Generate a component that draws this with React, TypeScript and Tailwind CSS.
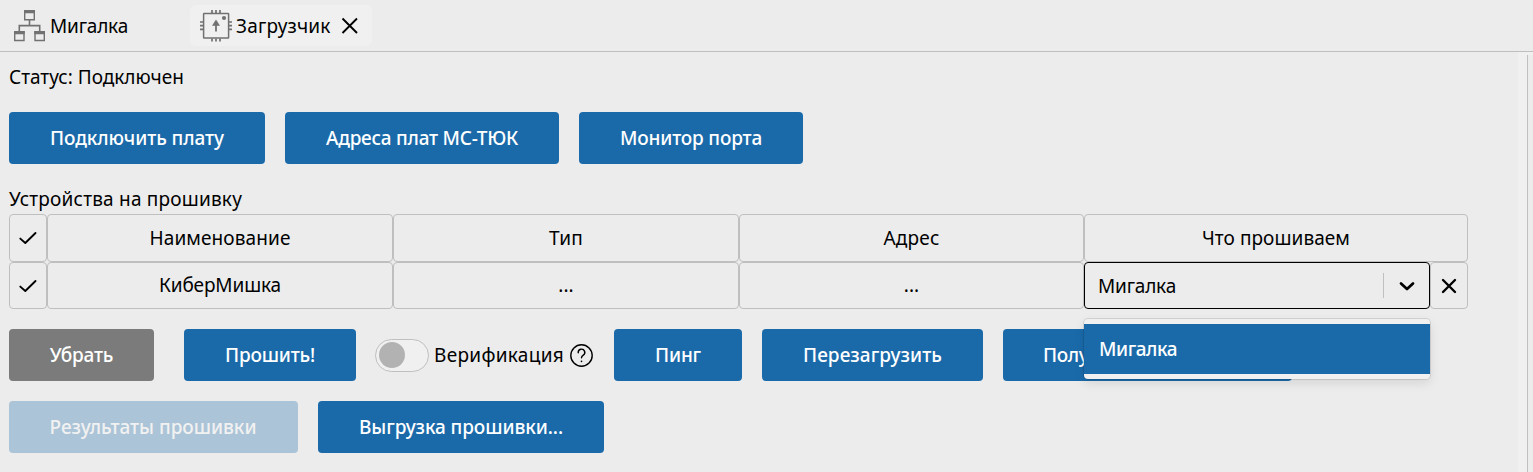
import type { ReactNode } from 'react';

function Button({ children, className }: { children: ReactNode; className: string }) {
  return (
    <button className={`flex h-[52px] shrink-0 items-center whitespace-nowrap rounded font-medium text-white ${className}`}>
      {children}
    </button>
  );
}

function Cell({ children, className }: { children?: ReactNode; className: string }) {
  return (
    <div className={`flex h-full shrink-0 items-center justify-center whitespace-nowrap rounded border border-[#bfbfbf] ${className}`}>
      {children}
    </div>
  );
}

function SchemeIcon() {
  return (
    <svg className="h-8 w-8 shrink-0" viewBox="0 0 32 32" fill="none" stroke="#717171">
      <path d="M11.700 .700h9.600v9.100h-9.600zM1.700 21.700h9.300v8.800H1.700zM22 21.700h9.300v8.800H22z" strokeWidth="1.400" />
      <path d="M11 0h11v3.300H11zM1 21h10.700v3.300H1zM21.300 21H32v3.300H21.300z" fill="#717171" stroke="none" />
      <path d="M16.500 10v5.500M6.300 21v-5.400h20.400V21" strokeWidth="1.600" />
    </svg>
  );
}

function ChipIcon() {
  return (
    <svg className="h-8 w-8 shrink-0" viewBox="0 0 32 32" fill="none" stroke="#717171">
      <rect x="3.600" y="3.500" width="25" height="24.500" rx=".5" strokeWidth="1.500" />
      <path d="M12 0v3M16 0v3M20 0v3M12 28.500v3M16 28.500v3M20 28.500v3M0 12h3M0 15.700h3M0 19.400h3M29 12h3M29 15.700h3M29 19.400h3" strokeWidth="1.700" />
      <path d="M16 21.500v-7" strokeWidth="1.800" />
      <path d="M16 9.500l4 6.300h-8z" fill="#717171" stroke="none" />
      <circle cx="24" cy="8" r="2.100" fill="#717171" stroke="none" />
    </svg>
  );
}

function CheckIcon() {
  return (
    <svg className="h-5 w-5" viewBox="0 0 20 20" fill="none" stroke="#000" strokeWidth="1.900" strokeLinecap="round" strokeLinejoin="round">
      <path d="M2.300 10.600L7.300 15 17.500 5" />
    </svg>
  );
}

export default function App() {
  return (
    <div className="flex h-[472px] flex-col overflow-hidden bg-[#ececec] font-['Noto_Sans',sans-serif] text-[19px] leading-6 text-black">
      <header className="flex h-[52px] shrink-0 items-start border-b border-[#bfbfbf] pt-[5px]">
        <div className="flex h-[41px] w-[190px] items-center pl-[13px]">
          <SchemeIcon />
          <span className="ml-[5px] tracking-[-0.19px]">Мигалка</span>
        </div>
        <div className="flex h-[41px] w-[182px] items-center rounded-md bg-[#f0f0f0] pl-2.5">
          <ChipIcon />
          <span className="ml-1 tracking-[0.2px]">Загрузчик</span>
          <svg className="ml-[9px] h-5 w-5" viewBox="0 0 20 20" fill="none" stroke="#000" strokeWidth="1.900">
            <path d="M2.500 2.500l14.500 14.500M17 2.500L2.500 17" />
          </svg>
        </div>
      </header>

      <div className="flex min-h-0 flex-1">
        <main className="flex min-w-0 flex-1 flex-col pl-[9px] pt-[13px]">
          <div>Статус: Подключен</div>
          <div className="mt-[23px] flex gap-5">
            <Button className="w-64 justify-center bg-[#1a6aaa] tracking-[-0.08px]">Подключить плату</Button>
            <Button className="w-[274px] justify-center bg-[#1a6aaa] tracking-[-0.25px]">Адреса плат МС-ТЮК</Button>
            <Button className="w-56 justify-center bg-[#1a6aaa] tracking-[-0.18px]">Монитор порта</Button>
          </div>

          <div className="mt-[23px] h-[27px] tracking-[0.2px]">Устройства на прошивку</div>
          <div className="flex h-12">
            <Cell className="w-[38px]"><CheckIcon /></Cell>
            <Cell className="w-[346px] tracking-[0.11px]">Наименование</Cell>
            <Cell className="w-[346px] tracking-[0.23px]">Тип</Cell>
            <Cell className="w-[345px] tracking-[0.19px]">Адрес</Cell>
            <Cell className="w-96 tracking-[0.07px]">Что прошиваем</Cell>
          </div>
          <div className="flex h-[47px]">
            <Cell className="w-[38px]"><CheckIcon /></Cell>
            <Cell className="w-[346px] pb-px tracking-[-0.13px]">КиберМишка</Cell>
            <Cell className="w-[346px] pb-px">...</Cell>
            <Cell className="w-[345px] pb-px">...</Cell>
            <div className="relative flex h-full w-[346px] shrink-0 items-center rounded border border-black pl-[13px]">
              <span className="flex-1 tracking-[-0.19px]">Мигалка</span>
              <span className="h-[25px] w-px bg-[#bfbfbf]" />
              <svg className="ml-[13px] mr-3 h-5 w-5" viewBox="0 0 20 20" fill="none" stroke="#000" strokeWidth="2.700" strokeLinecap="round" strokeLinejoin="round">
                <path d="M4 7.500l6 5.500 6-5.500" />
              </svg>
              <div className="absolute -left-px top-14 z-10 w-[346px] rounded bg-[#f0f0f0] py-[5px] shadow-[0_0_0_1px_rgba(0,0,0,0.1),0_4px_11px_rgba(0,0,0,0.1)]">
                <div className="flex h-[50px] items-center bg-[#1a6aaa] pl-[15px] font-medium tracking-[-0.46px] text-white">Мигалка</div>
              </div>
            </div>
            <Cell className="w-[38px]">
              <svg className="h-5 w-5" viewBox="0 0 20 20" fill="none" stroke="#000" strokeWidth="2.400" strokeLinecap="round">
                <path d="M4 4l12 12M16 4L4 16" />
              </svg>
            </Cell>
          </div>

          <div className="mt-5 flex items-center">
            <Button className="w-[145px] justify-center bg-[#7b7b7b] tracking-[-0.2px]">Убрать</Button>
            <Button className="ml-[30px] w-[172px] justify-center bg-[#1a6aaa] tracking-[-0.19px]">Прошить!</Button>
            <div className="ml-[19px] flex h-[33px] w-[54px] items-center rounded-full border border-[#bfbfbf] bg-[#f0f0f0] pl-[3px]">
              <span className="h-[26px] w-[26px] rounded-full bg-[#b2b2b2]" />
            </div>
            <span className="ml-[5px] w-[130px] whitespace-nowrap tracking-[0.31px]">Верификация</span>
            <svg className="ml-[5px] h-6 w-6" viewBox="0 0 24 24" fill="none" stroke="#000" strokeWidth="1.400" strokeLinecap="round" strokeLinejoin="round">
              <circle cx="12.500" cy="12.500" r="10.700" />
              <path d="M9.200 9.700a3.300 3.300 0 1 1 5.100 2.500c-1.200.8-1.800 1.300-1.800 2.500" />
              <path d="M12.500 18.300v.1" strokeWidth="1.600" />
            </svg>
            <Button className="ml-[21px] w-32 justify-center bg-[#1a6aaa] tracking-[-0.16px]">Пинг</Button>
            <Button className="ml-5 w-[221px] justify-center bg-[#1a6aaa] tracking-[0.06px]">Перезагрузить</Button>
            <Button className="ml-5 w-[289px] bg-[#1a6aaa] pl-10 tracking-[-0.4px]">Полу</Button>
          </div>
          <div className="mt-5 flex gap-5">
            <Button className="w-[289px] justify-center bg-[#1a6aaa] tracking-[-0.04px] opacity-30"><span className="pr-px">Результаты прошивки</span></Button>
            <Button className="w-[286px] justify-center bg-[#1a6aaa] tracking-[-0.09px]">Выгрузка прошивки...</Button>
          </div>
        </main>
        <div className="flex w-[15px] shrink-0 bg-[#f0f0f0] pl-[9px] pt-[3px]">
          <div className="flex-1 border-l border-[#bfbfbf] bg-[#ececec]" />
        </div>
      </div>
    </div>
  );
}
